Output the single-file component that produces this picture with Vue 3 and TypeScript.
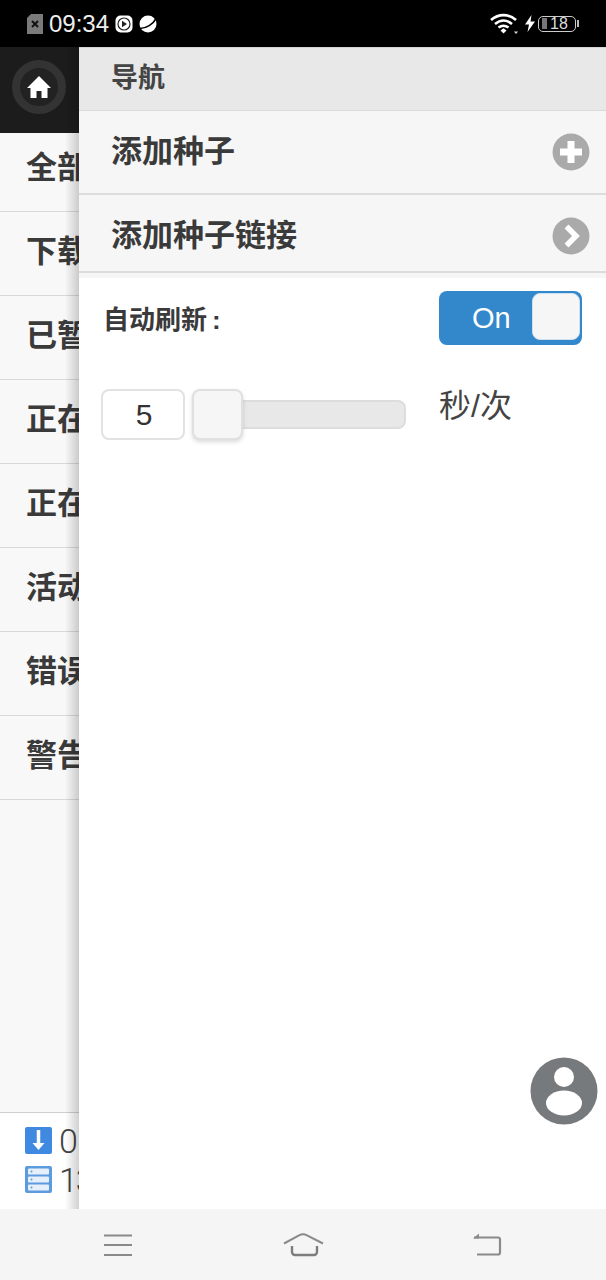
<template>
  <div class="phone">
    <!-- 状态栏 -->
    <header class="status-bar">
      <div class="status-left">
        <svg class="sim" width="16" height="20" viewBox="0 0 16 20">
          <path d="M4 0h12v20H0V4z" fill="#7a7a7a" />
          <path d="M5 7l6 6M11 7l-6 6" stroke="#111" stroke-width="2" />
        </svg>
        <span class="clock">09:34</span>
        <svg class="app-play" width="18" height="18" viewBox="0 0 18 18">
          <rect x="0.5" y="0.5" width="17" height="17" rx="5" fill="#fff" />
          <circle cx="9" cy="9" r="6" fill="none" stroke="#222" stroke-width="1.2" />
          <path d="M7 5.8l5 3.2-5 3.2z" fill="#222" />
        </svg>
        <svg class="app-globe" width="18" height="18" viewBox="0 0 18 18">
          <circle cx="9" cy="9" r="8.500" fill="#fff" />
          <path d="M1 13.500C7 13.500 14 9.500 17.500 3" stroke="#000" stroke-width="1.600" fill="none" />
        </svg>
      </div>
      <div class="status-right">
        <svg class="wifi" width="29" height="22" viewBox="0 0 29 22">
          <path d="M1 7C8.500 0.500 18.500 0.500 26 7M5 11c5.500-4.500 11.500-4.500 17 0M8.500 14.500c3.500-2.500 6.500-2.500 10 0" fill="none" stroke="#fff" stroke-width="2.600" />
          <path d="M10.500 17.500l3-2.200 3 2.200-3 3z" fill="#fff" />
          <path d="M24 18.500h4l-2 2.500z" fill="#ddd" />
        </svg>
        <svg class="bolt" width="10" height="17" viewBox="0 0 10 17">
          <path d="M6.500 0L0 9.500h4L2.500 17 10 6.500H5.500z" fill="#fff" />
        </svg>
        <div class="battery">
          <span class="battery-level"></span>
          <span class="battery-text">18</span>
        </div>
        <span class="battery-tip"></span>
      </div>
    </header>

    <div class="screen">
      <!-- 底层侧栏 -->
      <aside class="under">
        <div class="under-top">
          <span class="home-ring">
            <svg width="24" height="22" viewBox="0 0 24 22">
              <path d="M12 0L0 12h3.500v10h6v-7h5v7h6V12H24z" fill="#fff" />
            </svg>
          </span>
        </div>
        <ul class="filter-list">
          <li v-for="(item, i) in filters" :key="i">{{ item }}</li>
        </ul>
        <div class="under-spacer"></div>
        <div class="under-stats">
          <div class="stat-row">
            <svg width="27" height="27" viewBox="0 0 27 27">
              <rect width="27" height="27" rx="2" fill="#3f8ae0" />
              <path d="M13.500 3v15" stroke="#fff" stroke-width="3.500" />
              <path d="M7.500 16h12l-6 7z" fill="#fff" />
            </svg>
            <span>0</span>
          </div>
          <div class="stat-row">
            <svg width="27" height="27" viewBox="0 0 27 27">
              <rect width="27" height="27" rx="2" fill="#5d9bdf" />
              <rect x="3" y="2.500" width="21" height="6" rx="1" fill="#e6f0fb" />
              <rect x="3" y="10.500" width="21" height="6" rx="1" fill="#e6f0fb" />
              <rect x="3" y="18.500" width="21" height="6" rx="1" fill="#e6f0fb" />
              <circle cx="6.500" cy="5.500" r="1" fill="#5d9bdf" />
              <circle cx="6.500" cy="13.500" r="1" fill="#5d9bdf" />
              <circle cx="6.500" cy="21.500" r="1" fill="#5d9bdf" />
            </svg>
            <span>13</span>
          </div>
        </div>
      </aside>

      <!-- 右侧面板 -->
      <main class="panel">
        <div class="nav-title">导航</div>
        <div class="nav-row row-add">
          <span>添加种子</span>
          <svg class="nav-icon" width="38" height="38" viewBox="0 0 38 38">
            <circle cx="19" cy="19" r="18.500" fill="#aaa" />
            <path d="M19 8v22M8 19h22" stroke="#fff" stroke-width="7" />
          </svg>
        </div>
        <div class="nav-row row-link">
          <span>添加种子链接</span>
          <svg class="nav-icon" width="38" height="38" viewBox="0 0 38 38">
            <circle cx="19" cy="19" r="18.500" fill="#aaa" />
            <path d="M14.500 9.500L24 19l-9.500 9.500" fill="none" stroke="#fff" stroke-width="5.500" />
          </svg>
        </div>

        <div class="settings">
          <div class="refresh-row">
            <label class="refresh-label">自动刷新<span class="colon">:</span></label>
            <div class="toggle">
              <span class="toggle-text">On</span>
              <span class="toggle-knob"></span>
            </div>
          </div>
          <div class="slider-row">
            <div class="num-box">{{ interval }}</div>
            <div class="slider">
              <span class="slider-thumb"></span>
            </div>
            <span class="unit">秒/次</span>
          </div>
        </div>
      </main>

      <!-- 悬浮头像 -->
      <svg class="avatar" width="68" height="68" viewBox="0 0 68 68">
        <circle cx="34" cy="34" r="33.500" fill="#777a7d" />
        <circle cx="34" cy="20" r="10" fill="#fff" />
        <ellipse cx="34" cy="46" rx="18" ry="12.500" fill="#fff" />
      </svg>
    </div>

    <!-- 系统导航 -->
    <footer class="sys-nav">
      <svg width="30" height="24" viewBox="0 0 30 24">
        <path d="M1 2.500h28M1 12h28M1 22h28" stroke="#8a8a8a" stroke-width="2.200" fill="none" />
      </svg>
      <svg width="42" height="28" viewBox="0 0 42 28">
        <path d="M2 12.500L17 4.300Q21 2.200 25 4.300L41 12.500" stroke="#8a8a8a" stroke-width="2" fill="none" />
        <path d="M10 15v6a3 3 0 0 0 3 3h19a3 3 0 0 0 3-3v-6" stroke="#7d7d7d" stroke-width="2.400" fill="none" />
      </svg>
      <svg width="30" height="24" viewBox="0 0 30 24">
        <path d="M1 4.500h24a2 2 0 0 1 2 2v13a2 2 0 0 1-2 2H4" stroke="#8a8a8a" stroke-width="2.200" fill="none" />
        <path d="M0 5.500L6 0.500v5z" fill="#8a8a8a" />
      </svg>
    </footer>
  </div>
</template>

<script setup lang="ts">
import { ref } from 'vue'

const filters: string[] = ['全部', '下载', '已暂', '正在', '正在', '活动', '错误', '警告']
const interval = ref<number>(5)
</script>

<style scoped>
.phone {
  width: 606px;
  height: 1280px;
  display: flex;
  flex-direction: column;
  overflow: hidden;
  font-family: "Liberation Sans", "Noto Sans CJK SC", sans-serif;
  color: #333;
}

.status-bar {
  height: 47px;
  flex: none;
  background: #000;
  color: #fff;
  display: flex;
  justify-content: space-between;
  align-items: center;
  padding: 0 27px;
  box-sizing: border-box;
}

.status-left,
.status-right {
  display: flex;
  align-items: center;
}

.app-play {
  margin-left: 6px;
}

.app-globe {
  margin-left: 6px;
}

.clock {
  font-size: 24px;
  margin-left: 6px;
  color: #eee;
}

.wifi {
  margin-right: 6px;
}

.bolt {
  margin-right: 3px;
}

.battery {
  width: 38px;
  height: 16px;
  border: 1px solid #ccc;
  border-radius: 5px;
  display: flex;
  align-items: center;
  padding: 0 3px;
  box-sizing: border-box;
}

.battery-level {
  width: 5px;
  height: 11px;
  background: #777;
}

.battery-text {
  font-size: 16px;
  color: #ddd;
  margin-left: 3px;
}

.battery-tip {
  width: 2px;
  height: 7px;
  margin-left: 1px;
  background: #bbb;
}

.screen {
  flex: 1;
  display: flex;
  position: relative;
  min-height: 0;
}

.under {
  width: 79px;
  flex: none;
  background: #f8f8f8;
  display: flex;
  flex-direction: column;
  overflow: hidden;
  position: relative;
}

.under::after {
  content: "";
  position: absolute;
  top: 0;
  right: 0;
  bottom: 0;
  width: 14px;
  background: linear-gradient(to right, rgba(0, 0, 0, 0), rgba(0, 0, 0, 0.18));
}

.under-top {
  height: 86px;
  flex: none;
  background: #1c1c1c;
  box-sizing: border-box;
  padding: 13px 0 0 12px;
}

.home-ring {
  width: 54px;
  height: 54px;
  border-radius: 50%;
  border: 8px solid #333;
  box-sizing: border-box;
  background: #222;
  display: flex;
  align-items: center;
  justify-content: center;
}

.filter-list {
  list-style: none;
  margin: -5px 0 0;
  padding: 0;
}

.filter-list li {
  height: 84px;
  box-sizing: border-box;
  border-bottom: 1px solid #d8d8d8;
  padding-left: 26px;
  line-height: 80px;
  font-size: 31px;
  font-weight: 700;
  white-space: nowrap;
  color: #3a3a3a;
}

.under-spacer {
  flex: 1;
}

.under-stats {
  height: 97px;
  flex: none;
  background: #fff;
  border-top: 1px solid #cfcfcf;
  box-sizing: border-box;
  padding: 14px 0 0 25px;
  display: flex;
  flex-direction: column;
  gap: 12px;
}

.stat-row {
  display: flex;
  align-items: center;
  height: 27px;
  gap: 7px;
  font-family: Roboto, "Liberation Sans", sans-serif;
  font-size: 34px;
  font-weight: 300;
  letter-spacing: -2px;
  white-space: nowrap;
  color: #444;
}

.stat-row svg {
  flex: none;
}

.panel {
  flex: 1;
  background: #fff;
  min-width: 0;
}

.nav-title {
  height: 64px;
  background: #e8e8e8;
  border-top: 1px solid #d5d5d5;
  border-bottom: 1px solid #dadada;
  box-sizing: border-box;
  padding-left: 32px;
  line-height: 61px;
  font-size: 27px;
  font-weight: 700;
  color: #444;
}

.nav-row {
  background: #f6f6f6;
  display: flex;
  align-items: center;
  justify-content: space-between;
  box-sizing: border-box;
  padding: 0 16px 0 32px;
  font-size: 31px;
  font-weight: 700;
  color: #3a3a3a;
  border-bottom: 2px solid #dcdcdc;
}

.nav-row span {
  margin-bottom: 8px;
}

.row-add {
  height: 84px;
}

.row-link {
  height: 78px;
  padding-top: 6px;
  box-shadow: 0 5px 0 #f6f6f6;
}

.settings {
  padding: 13px 24px 0 24px;
}

.refresh-row {
  display: flex;
  align-items: center;
  justify-content: space-between;
  height: 54px;
  margin-top: 5px;
}

.refresh-label {
  font-size: 26px;
  font-weight: 700;
  color: #3a3a3a;
  margin-bottom: 2px;
}

.colon {
  margin-left: 5px;
}

.toggle {
  width: 143px;
  height: 54px;
  background: #3388cc;
  border-radius: 8px;
  position: relative;
  box-sizing: border-box;
  color: #fff;
  font-size: 29px;
  line-height: 55px;
  padding-left: 33px;
}

.toggle-knob {
  position: absolute;
  top: 2px;
  right: 2px;
  width: 46px;
  height: 45px;
  background: #f6f6f6;
  border: 1px solid #cfe0ee;
  border-radius: 8px;
}

.slider-row {
  display: flex;
  align-items: center;
  margin-top: 44px;
  margin-left: -2px;
}

.num-box {
  width: 84px;
  height: 51px;
  flex: none;
  box-sizing: border-box;
  border: 2px solid #e2e2e2;
  border-radius: 8px;
  background: #fff;
  padding-left: 2px;
  text-align: center;
  font-size: 30px;
  line-height: 47px;
  color: #333;
}

.slider {
  width: 214px;
  height: 29px;
  flex: none;
  margin-left: 7px;
  box-sizing: border-box;
  background: #e8e8e8;
  border: 2px solid #dddddd;
  border-radius: 8px;
  position: relative;
}

.slider-thumb {
  position: absolute;
  left: -2px;
  top: -13px;
  width: 51px;
  height: 51px;
  box-sizing: border-box;
  background: #f6f6f6;
  border: 2px solid #e0e0e0;
  border-radius: 8px;
  box-shadow: 0 2px 4px rgba(0, 0, 0, 0.15);
}

.unit {
  margin-left: 33px;
  font-size: 32px;
  color: #444;
  white-space: nowrap;
  position: relative;
  top: -12px;
}

.avatar {
  position: absolute;
  left: 530px;
  top: 1010px;
}

.sys-nav {
  height: 71px;
  flex: none;
  background: #f5f5f5;
  display: flex;
  align-items: center;
  justify-content: space-between;
  padding: 0 103px;
  box-sizing: border-box;
}
</style>

<style>
html,
body {
  margin: 0;
  background: #fff;
}
</style>
